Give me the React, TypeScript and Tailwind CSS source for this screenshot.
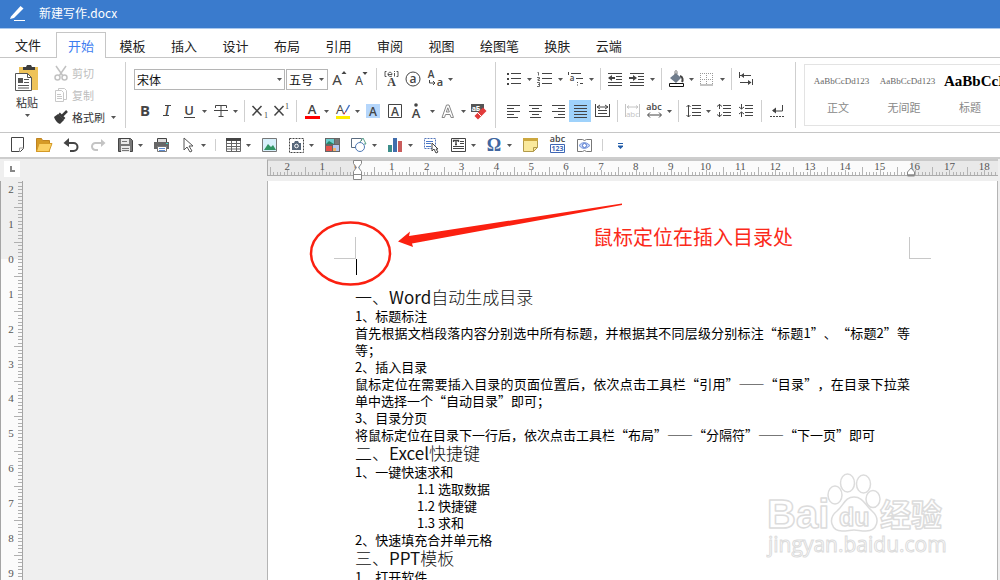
import React from "react";

const CJK = "font-['Noto_Sans_CJK_SC','Open_Sans',sans-serif]";

interface ToolItem {
  label?: string;
  icon?: React.ReactNode;
  menu?: boolean;
  active?: boolean;
  muted?: boolean;
  sep?: boolean;
}

function Ico({ children }: { children: React.ReactNode }) {
  return (
    <svg width="20" height="20" viewBox="0 0 20 20" fill="none" stroke="currentColor" className="overflow-visible" aria-hidden="true">
      {children}
    </svg>
  );
}

// A letter inside an icon
function T({ x, y, s, children, w = 400, f = "Open Sans", c = "currentColor", i = false }: {
  x: number; y: number; s: number; children: React.ReactNode; w?: number; f?: string; c?: string; i?: boolean;
}) {
  return (
    <text x={x} y={y} fontSize={s} fontWeight={w} fontFamily={`${f}, sans-serif`} fill={c} stroke="none" textAnchor="middle" fontStyle={i ? "italic" : "normal"}>
      {children}
    </text>
  );
}

function Caret() {
  return (
    <svg width="5" height="3" viewBox="0 0 5 3" aria-hidden="true">
      <path d="M0 0h5L2.5 3z" fill="#555" />
    </svg>
  );
}

/* ---------- icon drawings ---------- */

const fontRowTop: ToolItem[] = [
  { label: "增大字号", icon: <Ico><T x={8} y={16} s={15} f="Noto Sans">A</T><path d="M12.500 5h5L15 2z" fill="currentColor" stroke="none" /></Ico> },
  { label: "减小字号", icon: <Ico><T x={8} y={16} s={12} f="Noto Sans">A</T><path d="M11.500 3h5L14 6z" fill="currentColor" stroke="none" /></Ico> },
  { sep: true },
  { label: "拼音指南", icon: <Ico><path d="M5.500 2.500H4v5h1.500M15.500 2.500H17v5h-1.500M13.500 4v3.500M13.500 2v1M7 5.500h4c0-3-4-3-4 0 0 2 3 2.500 4 1.500" strokeWidth="0.900" /><T x={10.5} y={17} s={12} w={700} f="Liberation Serif">A</T></Ico> },
  { label: "带圈字符", icon: <Ico><circle cx="10" cy="10" r="7" /><T x={10} y={14} s={12} w={600}>a</T></Ico> },
  { label: "更改大小写", icon: <Ico><T x={6} y={9} s={10} w={600}>A</T><T x={15} y={17} s={11} w={600}>a</T><path d="M4.500 11v3h5M8 12l2 2-2 2" /></Ico>, menu: true },
];

const fontRowBottom: ToolItem[] = [
  { label: "加粗", icon: <Ico><T x={10} y={15} s={15} w={700} f="Noto Sans">B</T></Ico> },
  { label: "倾斜", icon: <Ico><T x={10} y={15} s={16} w={400} f="Liberation Serif" i>I</T><path d="M8 4.500h6M6 14.500h6" /></Ico> },
  { label: "下划线", icon: <Ico><T x={10} y={14} s={13} w={600}>U</T><path d="M5 16.500h11" /></Ico>, menu: true },
  { label: "删除线", icon: <Ico><path d="M5.500 7V4.500h11V7M11 4.500v11M8.500 15.500h5" /><path d="M4 9.500h14" /></Ico>, menu: true },
  { sep: true },
  { label: "下标", icon: <Ico><path d="M3.500 5l9 9.500M12.500 5l-9 9.500" strokeWidth="1.500" /><T x={17} y={17} s={8} f="Liberation Serif">1</T></Ico> },
  { label: "上标", icon: <Ico><path d="M3.500 5l9 9.500M12.500 5l-9 9.500" strokeWidth="1.500" /><T x={16} y={8} s={8} f="Liberation Serif">1</T></Ico> },
  { sep: true },
  { label: "字体颜色", icon: <Ico><T x={11} y={13} s={13} w={600}>A</T><path d="M4 16.500h15" stroke="#f00" strokeWidth="3" /></Ico>, menu: true },
  { label: "突出显示", icon: <Ico><T x={8} y={13} s={13}>A</T><path d="M17.500 4l-4 7" stroke="#4472c4" strokeWidth="1.500" /><path d="M13.500 10.500l-1.500 3" stroke="#d33" /><path d="M4 16.500h14" stroke="#ffee00" strokeWidth="3" /></Ico>, menu: true },
  { label: "字符底纹", icon: <Ico><path d="M3 3h14v14H3z" fill="#b5d6fb" stroke="none" /><T x={10} y={14.5} s={12} w={600}>A</T></Ico> },
  { label: "字符边框", icon: <Ico><path d="M3.500 3.500h13v13h-13z" /><T x={10} y={14.5} s={12} w={600}>A</T></Ico> },
  { label: "着重号", icon: <Ico><circle cx="9" cy="4" r="1.800" fill="currentColor" stroke="none" /><T x={9} y={17} s={13} w={600}>A</T></Ico>, menu: true },
  { label: "文字效果", icon: <Ico><path d="M4 16.500L8.500 4h2.500l4.500 12.500h-2.500l-1-3H7.500l-1 3zM8.300 11h3L9.800 6.800z" stroke="#888" /></Ico>, menu: true },
  { label: "清除格式", icon: <Ico><path d="M2 3h13v8H2z" fill="#555" stroke="none" /><T x={7} y={9.5} s={7} c="#fff" w={700}>aБ</T><path d="M9 15l5-5" stroke="#e23b3b" strokeWidth="5" strokeLinecap="square" /><path d="M8.500 11.500l4 4" stroke="#fff" /></Ico> },
];

const lines = (ys: number[], x1: number, x2: number) => ys.map((y) => `M${x1} ${y}.5H${x2}`).join("");

const paraRowTop: ToolItem[] = [
  { label: "项目符号", icon: <Ico><path d="M3 4h2v2H3zM3 9h2v2H3zM3 14h2v2H3z" fill="currentColor" stroke="none" /><path d={lines([4, 9, 14], 7, 17)} /></Ico>, menu: true },
  { label: "编号", icon: <Ico><path d="M2.500 3.500h1v3M2 8.500h2.500v1.500H3v1.500h2M2 13.500h2.500v4H2M3 15.500h1.500" strokeWidth="0.800" /><path d={lines([4, 9, 14], 7, 17)} /></Ico>, menu: true },
  { label: "多级列表", icon: <Ico><path d="M2.500 3v3" /><T x={6} y={12} s={8} w={600}>a</T><path d="M5 4.500h10M10 9.500h7M14 14.500h3M11.500 13v1M11.500 15.500v1" /></Ico>, menu: true },
  { sep: true },
  { label: "减少缩进", icon: <Ico><path d="M3 4.500h14M11 7.500h6M11 10.500h6M3 13.500h14M3 16.500h14" /><path d="M4 9h6" strokeWidth="2" /><path d="M7 6v6L3 9z" fill="currentColor" stroke="none" /></Ico> },
  { label: "增加缩进", icon: <Ico><path d="M3 4.500h14M11 7.500h6M11 10.500h6M3 13.500h14M3 16.500h14" /><path d="M2 9h5" strokeWidth="2" /><path d="M6 6v6l4-3z" fill="currentColor" stroke="none" /></Ico>, menu: true },
  { sep: true },
  { label: "底纹", icon: <Ico><path d="M4 9l6-5 5 5-5 5z" fill="#6f7c8c" stroke="none" /><path d="M14 7c3 1 3 4 2 6" strokeWidth="2" /><path d="M9 6V3c0-2 2-2 2 0v2" stroke="#777" /><path d="M3.500 14.500h14v3h-14z" fill="#fff" stroke="#111" /></Ico>, menu: true },
  { label: "边框", icon: <Ico><path d="M3.500 4v12M9.500 4v12M15.500 4v12M3 4.500h12M3 10.500h12" stroke="#999" strokeDasharray="1 1" /><path d="M3 16h13" stroke="#888" /></Ico>, menu: true },
  { sep: true },
  { label: "制表位", icon: <Ico><path d="M3.500 3v6M16.500 10v6M4 6.500h11M4 13.500h11" /><path d="M8 4v5L4.500 6.500zM12 11v5l3.500-2.500z" fill="currentColor" stroke="none" /></Ico> },
];

const paraRowBottom: ToolItem[] = [
  { label: "左对齐", icon: <Ico><path d="M3 4.500h13M3 7.500h7M3 10.500h13M3 13.500h7M3 16.500h11" /></Ico> },
  { label: "居中", icon: <Ico><path d="M3 4.500h13M6 7.500h7M3 10.500h13M6 13.500h7M4 16.500h11" /></Ico> },
  { label: "右对齐", icon: <Ico><path d="M4 4.500h13M10 7.500h7M4 10.500h13M10 13.500h7M6 16.500h11" /></Ico> },
  { label: "两端对齐", icon: <Ico><path d={lines([4, 7, 10, 13, 16], 4, 17)} /></Ico>, active: true },
  { label: "分散对齐", icon: <Ico><path d="M3.500 3v13M17.500 3v13M5 6h11M6 9.500h9M6 12.500h9M4 15.500h13" /><path d="M8 4L5 6l3 2M13 4l3 2-3 2" /></Ico> },
  { sep: true },
  { label: "调整宽度", icon: <Ico><path d="M3.500 3v13M17.500 3v13M5 6h11M7 4.500L5 6l2 1.500M14 4.500L16 6l-2 1.500" /><T x={10.5} y={16} s={8}>abc</T></Ico>, muted: true },
  { label: "字符缩放", icon: <Ico><T x={10} y={9} s={9} w={600}>abc</T><path d="M4 14h13M6 11.500L3.500 14 6 16.500M15 11.500l2.500 2.500-2.500 2.500" /></Ico>, menu: true },
  { sep: true },
  { label: "行距", icon: <Ico><path d="M5.500 4v12M3.500 6l2-2 2 2M3.500 14l2 2 2-2" /><path d={lines([4, 7, 11, 14], 9, 18)} /></Ico>, menu: true },
  { label: "增加段前距", icon: <Ico><path d="M5.500 3v5M3 5.500l2.500-2L8 5.500M5.500 11v5M3 13.500l2.500 2 2.500-2" /><path d={lines([4, 7, 11, 14], 9, 17)} /></Ico> },
  { label: "减少段前距", icon: <Ico><path d="M5.500 3v5M3 6l2.500 2L8 6M5.500 11v5M3 13l2.500-2L8 13" /><path d={lines([4, 7, 11, 14], 9, 17)} /></Ico> },
  { sep: true },
  { label: "显示标记", icon: <Ico><path d="M16.500 4v6H7" /><path d="M10 6.500v6L6 9.500z" fill="currentColor" stroke="none" /><path d="M4 15.500h14" strokeDasharray="2 1" /></Ico> },
];

const quickTools: ToolItem[] = [
  { label: "新建", icon: <Ico><path d="M4.500 2.500h12v11l-3 3h-9z" /><path d="M12.500 17v-4h4" stroke="#999" /></Ico> },
  { label: "打开", icon: <Ico><path d="M2.500 16.500v-13h5l1 2h7v11z" fill="#d59a26" stroke="#bf8320" /><path d="M5 8.500h13l-3 8H2.500z" fill="#fbd063" stroke="#d59a26" /></Ico> },
  { label: "撤销", icon: <Ico><path d="M4 8h8.500a4 4 0 010 8H9" strokeWidth="2" /><path d="M8 3v9L2.500 8z" fill="currentColor" stroke="none" /></Ico> },
  { label: "恢复", icon: <Ico><path d="M16 8H7.500a3.500 3.500 0 000 7H10" strokeWidth="2" /><path d="M13 4v8l4.500-4z" fill="currentColor" stroke="none" /></Ico>, muted: true },
  { label: "保存", icon: <Ico><path d="M3.500 3.500h12l2 2v11h-14z" fill="#777" /><path d="M6 4h8v5H6zM6 11h9v6H6z" fill="#e9e9e9" stroke="none" /><path d="M7 6.500h5M7 13.500h7M7 15.500h7" stroke="#777" /></Ico>, menu: true },
  { label: "打印", icon: <Ico><path d="M6.500 3.500h9v4h-9z" fill="#ddd" /><path d="M3 7h15v7H3z" fill="#666" stroke="none" /><path d="M6.500 11.500h9v5h-9z" fill="#fff" stroke="#777" /><path d="M8 13.500h6M8 15.500h6" stroke="#5b8bd0" /><path d="M15 8.500h2" stroke="#43d3c5" /></Ico> },
  { label: "选择", icon: <Ico><path d="M6 3v12l3-3 3 5 2-1-3-5h4z" stroke="#555" /></Ico>, menu: true },
  { sep: true },
  { label: "表格", icon: <Ico><path d="M3.500 3.500h14v13h-14zM3 8.500h14M3 11.500h14M3 14h14M8.500 4v13M13.500 4v13" stroke="#666" /><path d="M3 3h15v3H3z" fill="#444" stroke="none" /></Ico>, menu: true },
  { label: "图片", icon: <Ico><path d="M3.500 3.500h14v13h-14z" fill="#d7f0fb" stroke="#777" /><path d="M5 15l4-6 3 3 2-2 3 5z" fill="#2f9463" stroke="none" /></Ico> },
  { label: "截屏", icon: <Ico><path d="M3.500 3.500h14v14h-14z" strokeDasharray="2 1" /><path d="M6 8h2l1-2h3l1 2h2v7H6z" fill="#56677a" stroke="none" /><circle cx="10.500" cy="11" r="1.800" stroke="#fff" /></Ico>, menu: true },
  { label: "图库", icon: <Ico><path d="M3 3h15v14H3z" fill="#666" stroke="none" /><path d="M4 4h8v5H4z" fill="#6ccfd0" stroke="none" /><path d="M4 9l3-3 5 3z" fill="#25866a" stroke="none" /><path d="M13 4h4v5h-4z" fill="#777" stroke="none" /><path d="M4 11h6v5H4z" fill="#e5524b" stroke="none" /><path d="M11 10h6v6h-6z" fill="#b4c6ef" stroke="none" /><path d="M11 13h3v3h-3z" fill="#f4b66b" stroke="none" /></Ico> },
  { label: "形状", icon: <Ico><path d="M8 12.500H2.500v-9h10V6" stroke="#5a6c80" /><path d="M11 7l3-4 3 6h-2" stroke="#58a089" /><circle cx="11" cy="12" r="4.500" fill="#fff" stroke="#4e78b5" /></Ico>, menu: true },
  { label: "图表", icon: <Ico><path d="M3 10h4v7H3z" fill="#3c8e8a" stroke="none" /><path d="M8 3h4v14H8z" fill="#416dac" stroke="none" /><path d="M13 6h4v11h-4z" fill="#c95c5c" stroke="none" /></Ico>, menu: true },
  { label: "文本选择", icon: <Ico><path d="M3.500 3.500h11v10h-11z" stroke="#5577bb" strokeDasharray="2 1" /><path d="M5 6.500h7M5 8.500h5M5 11.500h5" stroke="#4a78c8" /><path d="M11 8v8l2-2 2 4 2-1-2-3h2z" fill="#fff" /></Ico> },
  { label: "文本框", icon: <Ico><path d="M3.500 3.500h14v13h-14z" /><path d="M5.500 7V5.500h5V7M8 5.500v4M7 9.500h2" strokeWidth="1.300" /><path d="M12 6.500h4M12 8.500h4M5 11.500h11M5 13.500h11" /></Ico>, menu: true },
  { label: "符号", icon: <Ico><T x={10} y={16} s={18} c="#41669f" w={700} f="Liberation Serif">Ω</T></Ico>, menu: true },
  { label: "便笺", icon: <Ico><path d="M3.500 3.500h14v9l-4 4h-10z" fill="#fae99c" stroke="#b29a4a" /><path d="M3 3h15v3H3z" fill="#cda83f" stroke="none" /><path d="M13.500 16.500v-4h4" stroke="#b29a4a" /></Ico> },
  { label: "字数统计", icon: <Ico><T x={10.5} y={7} s={9} w={600}>abc</T><path d="M3.500 9.500h14v8h-14z" stroke="#3f66b4" /><T x={10.5} y={16} s={7} w={700} c="#3f66b4">123</T></Ico> },
  { label: "阅读", icon: <Ico><path d="M3.500 4.500h5l2 1 2-1h5v12h-5l-2-1-2 1h-5z" stroke="#777" /><path d="M5 10.500q5-6 11 0-6 6-11 0z" fill="#c5d4f8" stroke="#7696da" /><circle cx="10.500" cy="10.500" r="2" fill="#fff" stroke="#5578cc" /></Ico> },
  { sep: true },
  { label: "更多", icon: <Ico><path d="M8 8.500h5" stroke="#215ca8" /><path d="M8 10.500h5v1L10.500 14 8 11.500z" fill="#215ca8" stroke="none" /></Ico> },
];

/* ---------- building blocks ---------- */

function Tools({ items, gap = "" }: { items: ToolItem[]; gap?: string }) {
  return (
    <div className={`flex items-center ${gap}`}>
      {items.map((item, i) =>
        item.sep ? (
          <span key={i} className={`flex justify-center ${gap ? "h-3 w-1" : "h-[22px] w-2"}`}>
            <span className="w-px bg-[#cfcfcf]" />
          </span>
        ) : (
          <span key={i} className="flex items-center">
            <button
              type="button"
              aria-label={item.label}
              className={`flex h-[22px] w-[22px] items-center justify-center ${item.active ? "bg-[#9fd2fb]" : ""} ${item.muted ? "text-[#c4c4c4]" : "text-[#444]"}`}
            >
              {item.icon}
            </button>
            {item.menu && (
              <button type="button" aria-label={`${item.label}选项`} className="flex h-[22px] w-[9px] items-center justify-center">
                <Caret />
              </button>
            )}
          </span>
        )
      )}
    </div>
  );
}

function Picker({ id, label, value, width }: { id: string; label: string; value: string; width: string }) {
  return (
    <label htmlFor={id} className={`relative block ${width}`}>
      <select id={id} aria-label={label} className="h-[21px] w-full appearance-none border border-[#b5b5b5] bg-white px-[2px] py-0 text-xs leading-[19px] text-[#111]">
        <option>{value}</option>
      </select>
      <span className="pointer-events-none absolute right-1 top-[9px]">
        <Caret />
      </span>
    </label>
  );
}

const TABS = ["开始", "模板", "插入", "设计", "布局", "引用", "审阅", "视图", "绘图笔", "换肤", "云端"];

const STYLES = [
  { name: "正文", sample: "text-[9px] text-[#666]" },
  { name: "无间距", sample: "text-[9px] text-[#666]" },
  { name: "标题", sample: "text-[15px] font-bold text-black" },
];

const UNIT = 34.85;

function TopRuler() {
  const origin = 90;
  const ticks = Array.from({ length: 211 }, (_, i) => i - 25);
  return (
    <svg width="100%" height="22" className="block" aria-hidden="true">
      <rect width="100%" height="17" fill="#e9e9e9" />
      <rect x={origin} y="2" width="554" height="14" fill="#fbfbfb" />
      <path d="M0 1h1000" stroke="#c9c9c9" strokeWidth="2" />
      <path d="M0 16.500h1000M.5 1v16" stroke="#ababab" />
      {ticks.map((t) => {
        const h = t % 10 === 0 ? 5 : t % 5 === 0 ? 8 : 3;
        const x = Math.round(origin + (t * UNIT) / 10) + 0.5;
        return <path key={t} d={`M${x} 16v-${h}`} stroke="#b4b4b4" />;
      })}
      {Array.from({ length: 21 }, (_, i) => i - 2).map((n) => (
        <text key={n} x={origin + n * UNIT} y="11" fontSize="11" textAnchor="middle" fill="#555" fontFamily="Liberation Serif, serif">
          {Math.abs(n)}
        </text>
      ))}
      <path d="M86.500 1.500h8v3l-3 4 3 4v8h-8v-8l3-4-3-4zM86.500 15.500h8" fill="#fff" stroke="#888" />
      <path d="M640.500 16v-3l3.500-4 3.500 4v3z" fill="#fff" stroke="#888" />
      <path d="M640.500 16.500h7" stroke="#888" strokeWidth="2" />
    </svg>
  );
}

function SideRuler() {
  const origin = 78;
  const ticks = Array.from({ length: 400 }, (_, i) => i - 22);
  return (
    <svg width="23" height="100%" className="block" aria-hidden="true">
      <rect width="22" height={origin} fill="#efefef" />
      <rect y={origin} width="22" height="100%" fill="#fbfbfb" />
      {ticks.map((t) => {
        const w = t % 10 === 0 ? 4 : t % 5 === 0 ? 8 : 4;
        const y = Math.round(origin + (t * UNIT) / 10) + 0.5;
        return <path key={t} d={`M22 ${y}h-${w}`} stroke="#b0b0b0" />;
      })}
      {Array.from({ length: 12 }, (_, i) => i - 2).map((n) => (
        <text key={n} x="11" y={origin + n * UNIT + 4} fontSize="11" textAnchor="middle" fill="#555" fontFamily="Liberation Serif, serif">
          {Math.abs(n)}
        </text>
      ))}
      <path d="M.5 0v2000M22.500 0v2000" stroke="#a5a5a5" />
    </svg>
  );
}

function Heading({ children }: { children: React.ReactNode }) {
  return <h2 className="text-[17px] font-light leading-5 text-[#111]">{children}</h2>;
}

function Latin({ children }: { children: React.ReactNode }) {
  return <span className="font-normal">{children}</span>;
}

function Watermark() {
  return (
    <svg width="190" height="96" viewBox="0 0 190 96" className="absolute left-[498px] top-[285px]" fill="#fff" stroke="#dcdcdc" strokeWidth="1.500" aria-hidden="true">
      <g fontWeight="700" strokeLinejoin="round">
        <text x="1" y="62" fontSize="40" fontFamily="Liberation Sans, sans-serif">Bai</text>
        <ellipse cx="69" cy="29" rx="7" ry="9" />
        <ellipse cx="81.500" cy="17" rx="7" ry="9" />
        <ellipse cx="97.500" cy="18" rx="7" ry="9" />
        <ellipse cx="107" cy="33" rx="7" ry="8.500" />
        <path d="M88 31c-9 0-10 8-17 14-10 8-5 20 5 20 6 0 8-1 12-1s6 1 12 1c11 0 15-12 6-20-7-6-9-14-18-14z" />
        <text x="73" y="60" fontSize="25" fontFamily="Liberation Sans, sans-serif">du</text>
        <text x="114" y="60" fontSize="31" fontFamily="Noto Sans CJK SC, sans-serif">经验</text>
      </g>
      <text x="2" y="86" fontSize="21" strokeWidth="1" fontFamily="Open Sans, sans-serif">jingyan.baidu.com</text>
    </svg>
  );
}

/* ---------- page ---------- */

export default function App() {
  return (
    <div lang="zh-CN" className={`flex h-screen flex-col overflow-hidden bg-white text-xs text-[#333] ${CJK}`}>
      <header className="flex h-[29px] shrink-0 items-center border-b border-[#a9c8ee] bg-[#3a7bcd] pb-[3px] text-white">
        <svg width="18" height="18" viewBox="0 0 18 18" className="ml-2" aria-hidden="true">
          <path d="M3 12.500L12.500 2l3 2.500L6 14l-4 1z" fill="#fff" />
          <path d="M6 16.500h11" stroke="#fff" />
        </svg>
        <h1 className="ml-[13px] text-xs">新建写作.docx</h1>
      </header>

      <nav className="flex h-[29px] shrink-0 items-stretch border-b border-[#c6c6c6] pt-[3px] text-[13px] text-[#222]">
        <button type="button" className="w-14">文件</button>
        <div className="-mb-px flex w-[578px] justify-between">
          {TABS.map((tab, i) => (
            <button
              key={tab}
              type="button"
              className={`whitespace-nowrap border border-b-0 px-[11px] ${i === 0 ? "border-[#c6c6c6] bg-white text-[#3d7df0]" : "border-transparent"}`}
            >
              {tab}
            </button>
          ))}
        </div>
      </nav>

      <section aria-label="功能区" className="flex h-[75px] shrink-0 border-b border-[#c6c6c6] py-1">
        <button type="button" className="flex w-[54px] flex-col items-center pt-0.5">
          <svg width="26" height="28" viewBox="0 0 26 28" aria-hidden="true">
            <path d="M5 3h19v23H5z" fill="#eec35a" />
            <path d="M9 6V3h3l1-2h4l1 2h3v3z" fill="#3d3d3d" />
            <path d="M1.500 9.500h12l4 4v13h-16z" fill="#fff" stroke="#555" />
            <path d="M13.500 9.500v4h4" fill="none" stroke="#555" />
            <path d="M4 14h5v5H4z" fill="#555" />
            <path d="M10 15.500h5M10 18.500h5M4 21.500h11M4 24h11" stroke="#555" />
          </svg>
          <span className="mt-[2px] text-[11px] leading-4">粘贴</span>
          <span className="mt-1">
            <Caret />
          </span>
        </button>
        <div className="flex w-[71px] flex-col justify-between py-[1px] text-[11px] text-[#bdbdbd]">
          <button type="button" className="flex h-5 items-center gap-1">
            <svg width="14" height="16" viewBox="0 0 14 16" fill="none" stroke="#c2c2c2" strokeWidth="1.500" aria-hidden="true">
              <path d="M2 1l7 10M12 1L5 11" />
              <circle cx="3.500" cy="12.500" r="2.500" />
              <circle cx="10.500" cy="12.500" r="2.500" />
            </svg>
            剪切
          </button>
          <button type="button" className="flex h-5 items-center gap-1">
            <svg width="14" height="16" viewBox="0 0 14 16" fill="#fff" stroke="#c8c8c8" aria-hidden="true">
              <path d="M4.500 1.500h6l2 2v9h-8z" />
              <path d="M1.500 3.500h6l2 2v9h-8zM3 7.500h4M3 9.500h5M3 11.500h5" />
            </svg>
            复制
          </button>
          <span className="flex h-5 items-center">
            <button type="button" className="flex items-center gap-1 text-[#333]">
              <svg width="14" height="14" viewBox="0 0 14 14" aria-hidden="true">
                <path d="M0 7l4-3 6 6-4 4c-3-1-5-4-6-7z" fill="#3a3a3a" />
                <path d="M5 3.500L10.500 9M8 6l5-5" stroke="#3a3a3a" strokeWidth="2.500" />
              </svg>
              格式刷
            </button>
            <button type="button" aria-label="格式刷选项" className="ml-1 flex h-5 w-[9px] items-center justify-center">
              <Caret />
            </button>
          </span>
        </div>

        <div className="flex w-[370px] shrink-0 flex-col justify-between border-l border-[#cfcfcf] py-[6px] pl-2">
          <div className="flex items-center">
            <Picker id="font-name" label="字体" value="宋体" width="w-[152px] pr-px" />
            <Picker id="font-size" label="字号" value="五号" width="w-[42px]" />
            <Tools items={fontRowTop} />
          </div>
          <Tools items={fontRowBottom} />
        </div>

        <div className="flex w-[300px] shrink-0 flex-col justify-between border-l border-[#cfcfcf] py-[6px] pl-[7px]">
          <Tools items={paraRowTop} />
          <Tools items={paraRowBottom} />
        </div>

        <div className="flex min-w-0 flex-1 border-l border-[#cfcfcf] py-[2px] pl-2">
          <div className="flex min-w-0 flex-1 overflow-hidden border border-r-0 border-[#e3e3e3]">
            {STYLES.map((s) => (
              <button key={s.name} type="button" className="flex w-[66px] shrink-0 flex-col justify-between pb-2 pl-[7px] pt-1">
                <span className={`font-['Liberation_Serif',serif] leading-6 ${s.sample}`}>AaBbCcDd123</span>
                <span className="self-center pr-[7px] text-[11px] leading-5 text-[#888]">{s.name}</span>
              </button>
            ))}
          </div>
        </div>
      </section>

      <section aria-label="快速访问" className="flex h-[26px] shrink-0 items-center border-b-2 border-[#cdcdcd] pl-[6px]">
        <Tools items={quickTools} gap="gap-[5px]" />
      </section>

      <main className="flex min-h-0 flex-1 flex-col bg-[#efefef] pr-[2px]">
        <div className="flex h-[22px] shrink-0">
          <div className="w-[267px] pl-1 pt-[2px]">
            <div className="flex h-4 w-4 items-center justify-center bg-white">
              <span className="h-[6px] w-[5px] border-b-2 border-l-2 border-[#888]" />
            </div>
          </div>
          <div className="min-w-0 flex-1">
            <TopRuler />
          </div>
        </div>
        <div className="flex min-h-0 flex-1">
          <div className="w-[267px] shrink-0">
            <SideRuler />
          </div>
          <article className="relative min-w-0 flex-1 overflow-hidden border-x border-[#b4b4b4] bg-white text-black">
            <div className="flex justify-between px-[66px] pt-14">
              <span className="h-[22px] w-[22px] border-b border-r border-[#c8c8c8]" />
              <span className="h-[22px] w-[22px] border-b border-l border-[#c8c8c8]" />
            </div>
            <div className="px-[87px] text-[13px] leading-[17px] [text-spacing-trim:space-all]">
              <p className="mb-3 flex h-4 pl-px">
                <span className="w-px bg-black" />
              </p>
              <Heading>一、<Latin>Word</Latin>自动生成目录</Heading>
              <p>1、标题标注</p>
              <p className="text-justify">首先根据文档段落内容分别选中所有标题，并根据其不同层级分别标注“标题1”、“标题2”等等；</p>
              <p>2、插入目录</p>
              <p className="text-justify">鼠标定位在需要插入目录的页面位置后，依次点击工具栏“引用”——“目录”，在目录下拉菜单中选择一个“自动目录”即可；</p>
              <p>3、目录分页</p>
              <p>将鼠标定位在目录下一行后，依次点击工具栏“布局”——“分隔符”——“下一页”即可</p>
              <Heading>二、<Latin>Excel</Latin>快捷键</Heading>
              <p>1、一键快速求和</p>
              <div className="pl-[62px]">
                <p>1.1 选取数据</p>
                <p>1.2 快捷键</p>
                <p>1.3 求和</p>
              </div>
              <p>2、快速填充合并单元格</p>
              <Heading>三、<Latin>PPT</Latin>模板</Heading>
              <p>1、打开软件</p>
            </div>

            {/* Red callout drawn over the page */}
            <svg width="320" height="110" viewBox="0 0 320 110" className="absolute left-[43px] top-[19px] overflow-visible" aria-hidden="true">
              <ellipse cx="39.500" cy="53.500" rx="39.500" ry="31" fill="none" stroke="#fb2010" strokeWidth="2.500" />
              <path d="M87 41.500l12-10-1 4.500L311 3.500v1.500L101 43.500l1 3.500z" fill="#fb2010" />
            </svg>
            <p className="absolute left-[325px] top-[42px] text-xl text-[#fb2a1a]">鼠标定位在插入目录处</p>
            <Watermark />
          </article>
        </div>
      </main>
    </div>
  );
}
